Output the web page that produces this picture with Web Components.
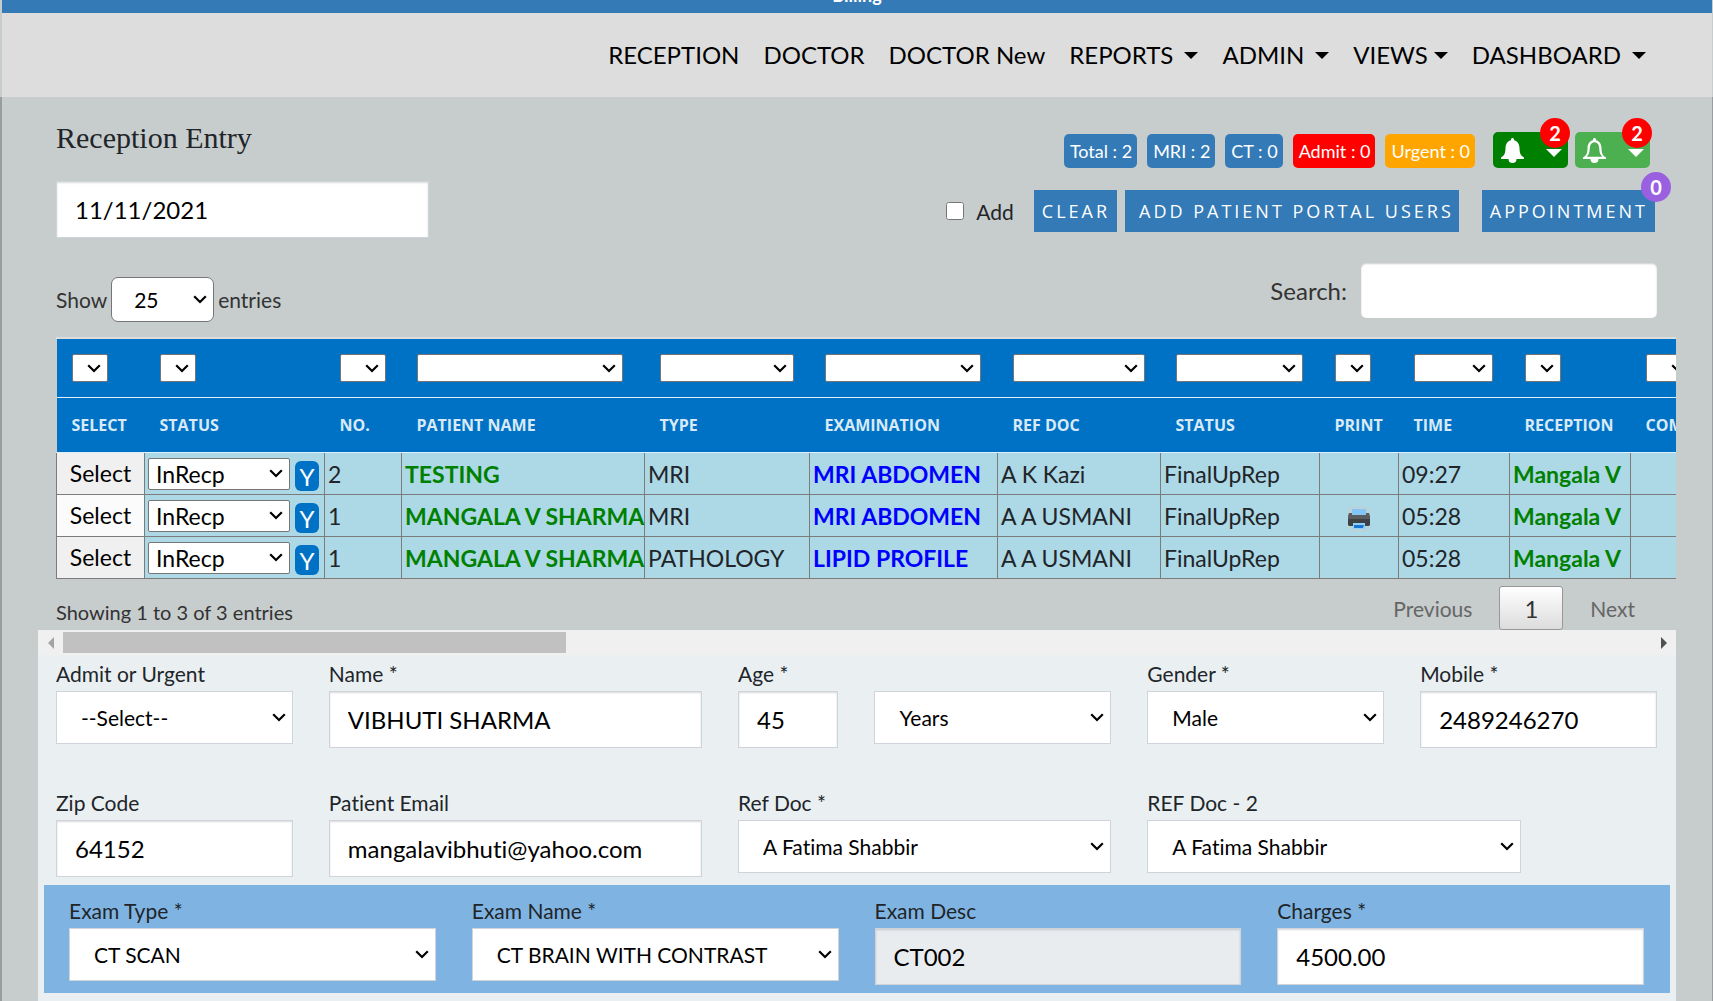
<!DOCTYPE html>
<html lang="en">
<head>
<meta charset="utf-8">
<title>Reception Entry</title>
<style>
  body {
    margin: 0;
    min-height: 100vh;
    background: #c7cccd;
    color: #212529;
    font-family: Lato, "Liberation Sans", sans-serif;
    font-size: 21px;
    font-variant-ligatures: none;
    overflow-x: hidden;
  }
</style>
</head>
<body>

<app-header>
  <nav-item href="#reception">RECEPTION</nav-item>
  <nav-item href="#doctor">DOCTOR</nav-item>
  <nav-item href="#doctor-new">DOCTOR New</nav-item>
  <nav-item href="#reports" menu>REPORTS</nav-item>
  <nav-item href="#admin" menu>ADMIN</nav-item>
  <nav-item href="#views" menu tight>VIEWS</nav-item>
  <nav-item href="#dashboard" menu>DASHBOARD</nav-item>
</app-header>

<page-body>
  <reception-toolbar>
    <status-badge slot="badges">Total : 2</status-badge>
    <status-badge slot="badges">MRI : 2</status-badge>
    <status-badge slot="badges">CT : 0</status-badge>
    <status-badge slot="badges" color="#ff0000">Admit : 0</status-badge>
    <status-badge slot="badges" color="#ffa500">Urgent : 0</status-badge>
    <bell-button slot="bells" color="#008000" count="2" filled></bell-button>
    <bell-button slot="bells" color="#4caf50" count="2"></bell-button>
  </reception-toolbar>
  <table-controls></table-controls>
  <patient-table></patient-table>
  <table-pager></table-pager>
  <scroll-track></scroll-track>

  <entry-form>
    <form-field span="2" label="Admit or Urgent" type="select" value="--Select--"></form-field>
    <form-field span="3" label="Name *" value="VIBHUTI SHARMA"></form-field>
    <form-field span="1" label="Age *" value="45"></form-field>
    <form-field span="2" type="select" name="Age unit" value="Years"></form-field>
    <form-field span="2" label="Gender *" type="select" value="Male"></form-field>
    <form-field span="2" label="Mobile *" value="2489246270"></form-field>

    <form-field span="2" label="Zip Code" value="64152"></form-field>
    <form-field span="3" label="Patient Email" value="mangalavibhuti@yahoo.com"></form-field>
    <form-field span="3" label="Ref Doc *" type="select" value="A Fatima Shabbir"></form-field>
    <form-field span="3" label="REF Doc - 2" type="select" value="A Fatima Shabbir"></form-field>

    <form-field slot="exam" label="Exam Type *" type="select" value="CT SCAN"></form-field>
    <form-field slot="exam" label="Exam Name *" type="select" value="CT BRAIN WITH CONTRAST"></form-field>
    <form-field slot="exam" label="Exam Desc" value="CT002" readonly></form-field>
    <form-field slot="exam" label="Charges *" value="4500.00"></form-field>
  </entry-form>
</page-body>

<script>
// shared look of every drop-down
const selectStyles = `
  select {
    appearance: none;
    box-sizing: border-box;
    margin: 0;
    color: #000;
    font-family: inherit;
    font-variant-ligatures: none;
    border: 1px solid #767676;
    border-radius: 2px;
    background: #fff url("data:image/svg+xml,%3Csvg xmlns='http://www.w3.org/2000/svg' width='14' height='9'%3E%3Cpath d='M1.2 1.2 7 7l5.8-5.8' fill='none' stroke='%23000' stroke-width='2.2'/%3E%3C/svg%3E") no-repeat right 6px center;
  }
`;

class AppHeader extends HTMLElement {
  constructor() {
    super();
    this.attachShadow({ mode: 'open' });
    this.shadowRoot.innerHTML = `
      <style>
        :host { display: block; margin: 0 1px 0 2px; }
        .bar {
          display: flex;
          align-items: flex-end;
          justify-content: center;
          height: 13px;
          overflow: hidden;
          background: #337ab7;
          color: #fff;
          font-size: 18px;
          font-weight: 700;
          line-height: 22px;
        }
        .bar span { margin-bottom: 7px; }
        nav {
          display: flex;
          align-items: center;
          justify-content: flex-end;
          gap: 24px;
          height: 84px;
          padding-right: 66px;
          background: #ddd;
        }
      </style>
      <div class="bar"><span>Billing</span></div>
      <nav><slot></slot></nav>
    `;
  }
}

class NavItem extends HTMLElement {
  connectedCallback() {
    this.attachShadow({ mode: 'open' });
    this.shadowRoot.innerHTML = `
      <style>
        :host { display: block; }
        a {
          display: flex;
          align-items: center;
          gap: ${this.hasAttribute('tight') ? 6 : 11}px;
          color: #000;
          font-size: 24px;
          line-height: 36px;
          text-decoration: none;
          white-space: nowrap;
        }
        i {
          border: 7px solid transparent;
          border-top-color: #000;
          border-bottom: 0;
        }
      </style>
      <a href="${this.getAttribute('href')}"><slot></slot>${this.hasAttribute('menu') ? '<i></i>' : ''}</a>
    `;
  }
}

class PageBody extends HTMLElement {
  constructor() {
    super();
    this.attachShadow({ mode: 'open' });
    this.shadowRoot.innerHTML = `
      <style>
        :host {
          display: block;
          padding: 0 36px;
          border-left: 2px solid #9a9d9f;
          border-right: 1px solid #9a9d9f;
        }
      </style>
      <slot></slot>
    `;
  }
}

class StatusBadge extends HTMLElement {
  connectedCallback() {
    this.attachShadow({ mode: 'open' });
    this.shadowRoot.innerHTML = `
      <style>
        :host {
          display: block;
          padding: 0 5px 0 6px;
          border-radius: 5px;
          background: ${this.getAttribute('color') || '#337ab7'};
          color: #fff;
          font-size: 18px;
          line-height: 34px;
          white-space: nowrap;
        }
      </style>
      <slot></slot>
    `;
  }
}

class BellButton extends HTMLElement {
  connectedCallback() {
    this.attachShadow({ mode: 'open' });
    const inner = this.hasAttribute('filled') ? '' :
      `<path fill="${this.getAttribute('color')}" d="M11.5 4.2c-3 .3-4.6 2.6-4.7 5.8-.1 4.2-.9 6.6-3 8.8h15.4c-2.1-2.2-2.9-4.6-3-8.8-.1-3.2-1.7-5.5-4.7-5.800z"/>`;
    this.shadowRoot.innerHTML = `
      <style>
        :host { display: block; position: relative; }
        button {
          display: flex;
          align-items: center;
          justify-content: space-between;
          width: 75px;
          height: 36px;
          padding: 0 6px 0 8px;
          border: 0;
          border-radius: 5px;
          background: ${this.getAttribute('color')};
        }
        i {
          margin-top: 6px;
          border: 8px solid transparent;
          border-top-color: #fff;
          border-bottom: 0;
        }
        .count {
          position: absolute;
          top: -14px;
          right: -2px;
          width: 30px;
          border-radius: 50%;
          background: #f00;
          color: #fff;
          font-size: 20px;
          font-weight: 700;
          line-height: 30px;
          text-align: center;
        }
      </style>
      <button aria-label="Notifications">
        <svg width="23" height="25" viewBox="0 0 23 25">
          <path fill="#fff" d="M11.5 0c.9 0 1.5.7 1.5 1.5v.8c3.4.7 5.4 3.7 5.5 7.7.1 5.5 1.3 7.7 4.5 9.5v1.5h-7.5a4 4 0 0 1-8 0H0v-1.5c3.2-1.8 4.4-4 4.5-9.5.1-4 2.1-7 5.5-7.700v-.8C10 .7 10.6 0 11.5 0z"/>
          ${inner}
        </svg>
        <i></i>
      </button>
      <span class="count">${this.getAttribute('count')}</span>
    `;
  }
}

class ReceptionToolbar extends HTMLElement {
  constructor() {
    super();
    this.attachShadow({ mode: 'open' });
    this.shadowRoot.innerHTML = `
      <style>
        :host {
          display: flex;
          justify-content: space-between;
          padding: 23px 21px 0 18px;
        }
        h1 {
          margin: 0 0 25px;
          font: 400 30px/36px "Liberation Serif", serif;
        }
        .date {
          box-sizing: border-box;
          width: 373px;
          height: 57px;
          padding: 0 18px;
          border: 1px solid #ced4da;
          box-shadow: inset 0 1px 2px rgba(0, 0, 0, .15);
          color: #000;
          font: 24px Lato, sans-serif;
        }
        .side {
          display: flex;
          flex-direction: column;
          align-items: flex-end;
          gap: 22px;
          padding-top: 12px;
        }
        .badges, .bells, .actions { display: flex; }
        .badges { align-items: flex-end; gap: 10px; padding-right: 5px; }
        .bells { gap: 7px; margin-left: 8px; }
        label {
          display: flex;
          align-items: center;
          gap: 12px;
          margin-right: 20px;
        }
        input[type="checkbox"] { width: 18px; height: 18px; margin: 0; }
        .actions button {
          height: 42px;
          padding: 0 7px 0 8px;
          border: 0;
          background: #337ab7;
          color: #fff;
          font: 18px "Open Sans", sans-serif;
          letter-spacing: 3px;
        }
        .actions .portal { margin: 0 23px 0 8px; padding: 0 5px 0 14px; }
        .appointment { position: relative; }
        .appointment span {
          position: absolute;
          top: -18px;
          right: -16px;
          width: 30px;
          border-radius: 50%;
          background: #9a60e0;
          color: #fff;
          font-size: 20px;
          font-weight: 700;
          line-height: 30px;
          text-align: center;
        }
      </style>
      <div>
        <h1>Reception Entry</h1>
        <input class="date" type="text" value="11/11/2021" aria-label="Date">
      </div>
      <div class="side">
        <div class="badges">
          <slot name="badges"></slot>
          <div class="bells"><slot name="bells"></slot></div>
        </div>
        <div class="actions">
          <label><input type="checkbox">Add</label>
          <button>CLEAR</button>
          <button class="portal">ADD PATIENT PORTAL USERS</button>
          <div class="appointment"><button>APPOINTMENT</button><span>0</span></div>
        </div>
      </div>
    `;
  }
}

class TableControls extends HTMLElement {
  constructor() {
    super();
    this.attachShadow({ mode: 'open' });
    this.shadowRoot.innerHTML = `
      <style>
        ${selectStyles}
        :host {
          display: flex;
          align-items: flex-start;
          justify-content: space-between;
          padding: 25px 19px 15px 18px;
          color: #333;
        }
        label { display: flex; align-items: center; }
        .length { gap: 4px; margin-top: 14px; }
        .length select {
          width: 103px;
          height: 45px;
          padding: 0 22px;
          border-radius: 7px;
          font-size: 21px;
        }
        .search { gap: 14px; font-size: 24px; }
        .search input {
          box-sizing: border-box;
          width: 296px;
          height: 55px;
          border: 0;
          border-radius: 5px;
          background: #fff;
          box-shadow: inset 0 1px 2px rgba(0, 0, 0, .2);
          font: 24px Lato, sans-serif;
        }
      </style>
      <label class="length">Show <select><option>25</option></select> entries</label>
      <label class="search">Search: <input type="search"></label>
    `;
  }
}

// title, column width, filter width
const columns = [
  ['SELECT', 88, 36],
  ['STATUS', 180, 36],
  ['NO.', 77, 46],
  ['PATIENT NAME', 243, 206],
  ['TYPE', 165, 134],
  ['EXAMINATION', 188, 156],
  ['REF DOC', 163, 132],
  ['STATUS', 159, 127],
  ['PRINT', 79, 36],
  ['TIME', 111, 79],
  ['RECEPTION', 121, 36],
  ['COMMENT', 160, 46]
];

const patients = [
  ['2', 'TESTING', 'MRI', 'MRI ABDOMEN', 'A K Kazi', 'FinalUpRep', false, '09:27', 'Mangala V'],
  ['1', 'MANGALA V SHARMA', 'MRI', 'MRI ABDOMEN', 'A A USMANI', 'FinalUpRep', true, '05:28', 'Mangala V'],
  ['1', 'MANGALA V SHARMA', 'PATHOLOGY', 'LIPID PROFILE', 'A A USMANI', 'FinalUpRep', false, '05:28', 'Mangala V']
];

const printer = `
  <svg width="22" height="24" viewBox="0 0 22 24">
    <rect x=".5" y=".5" width="21" height="23" rx="5" fill="#b8d3dc" stroke="#c3cfd0"/>
    <path fill="#83c5f7" d="M4 2h14v7H4z"/>
    <path fill="#5a5d60" d="M1 6h3v2h14V6h3l1 3v8q0 2-2 2H2q-2 0-2-2V9z"/>
    <path fill="#3e4144" d="M0 12h22v5q0 2-2 2H2q-2 0-2-2z"/>
    <path fill="#8fd0fb" d="M5 16h12v6H5z"/>
    <path fill="#1876d2" d="M6 18h10l-1 3H6z"/>
  </svg>`;

class PatientTable extends HTMLElement {
  connectedCallback() {
    this.attachShadow({ mode: 'open' });
    const total = columns.reduce((sum, c) => sum + c[1], 0);
    this.shadowRoot.innerHTML = `
      <style>
        ${selectStyles}
        :host { display: block; margin-left: 18px; overflow: hidden; border-top: 2px solid #dcdddd; }
        table { width: ${total}px; table-layout: fixed; border-collapse: collapse; }
        th {
          padding: 0 0 0 15px;
          background: #0072c6;
          border-bottom: 1px solid #dfeef8;
          color: #d9eaf6;
          font: 700 16px "Open Sans", sans-serif;
          text-align: left;
          white-space: nowrap;
        }
        .filters th { height: 58px; }
        .titles th { height: 54px; }
        .filters select { display: block; height: 28px; }
        td {
          height: 41px;
          padding: 0 3px;
          border: 1px solid #7c7c7c;
          background: #add8e6;
          font-size: 23px;
          line-height: 36px;
          white-space: nowrap;
        }
        td:first-child { padding: 0; }
        td:first-child button {
          display: block;
          width: 100%;
          height: 41px;
          padding: 0 0 1px;
          border: 0;
          background: #f0f0f0;
          color: #000;
          font: 23px Lato, sans-serif;
        }
        tr:nth-child(even) td:first-child button { background: #fbfbfb; }
        .status { display: flex; align-items: center; gap: 5px; }
        .status select { width: 142px; height: 32px; padding: 0 7px; font-size: 23px; }
        .status button {
          width: 24px;
          height: 30px;
          margin-top: 5px;
          padding: 0;
          border: 0;
          border-radius: 6px;
          background: #0072c6;
          color: #fff;
          font: 24px Lato, sans-serif;
        }
        .name { color: #008000; font-weight: 700; }
        .exam { color: #00f; font-weight: 700; }
        .print { text-align: center; }
        svg { vertical-align: middle; }
      </style>
      <table>
        <colgroup>${columns.map(c => `<col style="width: ${c[1]}px">`).join('')}</colgroup>
        <thead>
          <tr class="filters">
            ${columns.map(c => `<th><select style="width: ${c[2]}px" aria-label="Filter"></select></th>`).join('')}
          </tr>
          <tr class="titles">${columns.map(c => `<th>${c[0]}</th>`).join('')}</tr>
        </thead>
        <tbody>
          ${patients.map(p => `
            <tr>
              <td><button>Select</button></td>
              <td><div class="status"><select aria-label="Status"><option>InRecp</option></select><button>Y</button></div></td>
              <td>${p[0]}</td>
              <td class="name">${p[1]}</td>
              <td>${p[2]}</td>
              <td class="exam">${p[3]}</td>
              <td>${p[4]}</td>
              <td>${p[5]}</td>
              <td class="print">${p[6] ? printer : ''}</td>
              <td>${p[7]}</td>
              <td class="name">${p[8]}</td>
              <td></td>
            </tr>`).join('')}
        </tbody>
      </table>
    `;
  }
}

class TablePager extends HTMLElement {
  constructor() {
    super();
    this.attachShadow({ mode: 'open' });
    this.shadowRoot.innerHTML = `
      <style>
        :host {
          display: flex;
          align-items: center;
          justify-content: space-between;
          padding: 7px 16px 0 18px;
          color: #333;
        }
        .info { margin-top: 8px; font-size: 20px; }
        .pages { display: flex; gap: 2px; }
        button {
          height: 44px;
          padding: 0 24px;
          border: 1px solid transparent;
          border-radius: 3px;
          background: none;
          color: #666;
          font: 21px Lato, sans-serif;
        }
        .current {
          border-color: #979797;
          background: linear-gradient(#fff, #dcdcdc);
          color: #333;
          font-size: 24px;
        }
      </style>
      <div class="info">Showing 1 to 3 of 3 entries</div>
      <div class="pages">
        <button>Previous</button>
        <button class="current">1</button>
        <button>Next</button>
      </div>
    `;
  }
}

class ScrollTrack extends HTMLElement {
  constructor() {
    super();
    this.attachShadow({ mode: 'open' });
    this.shadowRoot.innerHTML = `
      <style>
        :host { display: flex; align-items: center; height: 25px; background: #f0f0f0; }
        i { width: 25px; display: flex; justify-content: center; }
        i::before { content: ""; border: 6px solid transparent; }
        .left::before { border-left: 0; border-right-color: #a3a3a3; }
        .right::before { border-right: 0; border-left-color: #505050; }
        .track { flex: 1; }
        .thumb { width: 31.7%; height: 21px; background: #c1c1c1; }
      </style>
      <i class="left"></i>
      <div class="track"><div class="thumb"></div></div>
      <i class="right"></i>
    `;
  }
}

class EntryForm extends HTMLElement {
  constructor() {
    super();
    this.attachShadow({ mode: 'open' });
    this.shadowRoot.innerHTML = `
      <style>
        :host { display: block; padding-bottom: 8px; background: #eaf0f2; }
        .patient {
          display: grid;
          grid-template-columns: repeat(12, 1fr);
          gap: 36px;
          padding: 0 19px 8px 18px;
        }
        .exam {
          display: grid;
          grid-template-columns: repeat(4, 1fr);
          gap: 36px;
          margin: 0 6px;
          padding: 7px 26px 8px 25px;
          background: #7fb4e2;
        }
      </style>
      <div class="patient"><slot></slot></div>
      <div class="exam"><slot name="exam"></slot></div>
    `;
  }
}

class FormField extends HTMLElement {
  connectedCallback() {
    this.attachShadow({ mode: 'open' });
    const label = this.getAttribute('label') || '';
    const value = this.getAttribute('value');
    const name = this.getAttribute('name');
    const aria = name ? ` aria-label="${name}"` : '';
    const readonly = this.hasAttribute('readonly') ? ' readonly' : '';
    const control = this.getAttribute('type') === 'select'
      ? `<select id="control"${aria}><option>${value}</option></select>`
      : `<input id="control" type="text" value="${value}"${readonly}>`;

    this.shadowRoot.innerHTML = `
      <style>
        ${selectStyles}
        :host { display: block; min-width: 0; grid-column: span ${this.getAttribute('span') || 1}; }
        label { display: block; height: 30px; padding-top: 6px; line-height: 26px; }
        select, input {
          box-sizing: border-box;
          display: block;
          width: 100%;
          border: 1px solid #ced4da;
          border-radius: 0;
        }
        select { height: 53px; padding: 0 24px; font-size: 21px; }
        input {
          height: 57px;
          padding: 0 18px;
          background: #fff;
          box-shadow: inset 0 1px 2px rgba(0, 0, 0, .15);
          color: #000;
          font: 24px Lato, sans-serif;
          font-variant-ligatures: none;
        }
        input[readonly] { background: #e9ecef; }
      </style>
      <label for="control">${label}</label>
      ${control}
    `;
  }
}

customElements.define('app-header', AppHeader);
customElements.define('nav-item', NavItem);
customElements.define('page-body', PageBody);
customElements.define('status-badge', StatusBadge);
customElements.define('bell-button', BellButton);
customElements.define('reception-toolbar', ReceptionToolbar);
customElements.define('table-controls', TableControls);
customElements.define('patient-table', PatientTable);
customElements.define('table-pager', TablePager);
customElements.define('scroll-track', ScrollTrack);
customElements.define('entry-form', EntryForm);
customElements.define('form-field', FormField);
</script>
</body>
</html>
